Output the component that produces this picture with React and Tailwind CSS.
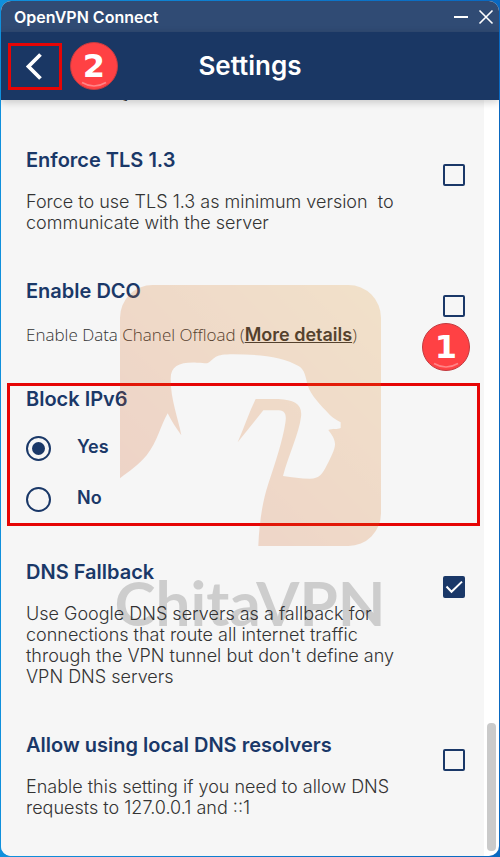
import React, { useState } from "react";

const headingClass = "text-[20px] leading-6 font-semibold text-[#1a3868]";
const bodyClass = "text-[18px] leading-[21px] font-light text-[#333]";

function Badge({ children }) {
  return (
    <span className="flex size-12 items-center justify-center rounded-full border border-[#c23b40] bg-[#ff4144] font-['DejaVu_Sans',sans-serif] text-[32px] leading-8 font-bold text-white">
      <svg viewBox="0 0 48 48" className="absolute size-12" fill="none" aria-hidden="true">
        <path d="M12 40.5Q24 47.5 36 40.5" stroke="#ff8587" strokeWidth="1.6" />
      </svg>
      {children}
    </span>
  );
}

function Setting({ id, title, checked = false, className, children }) {
  const [on, setOn] = useState(checked);
  return (
    <section className={`flex items-start justify-between pr-[19px] pl-[25px] ${className}`}>
      <div className="max-w-[374px]">
        <label htmlFor={id} className={`block ${headingClass}`}>
          {title}
        </label>
        {children}
      </div>
      <span className="mt-4 grid size-[22px] shrink-0 place-items-center">
        <input
          id={id}
          type="checkbox"
          checked={on}
          onChange={(e) => setOn(e.target.checked)}
          className="col-start-1 row-start-1 size-[22px] appearance-none rounded-[2px] border-2 border-[#1a3868] checked:bg-[#1a3868]"
        />
        {on && (
          <svg
            viewBox="0 0 22 22"
            className="pointer-events-none col-start-1 row-start-1 size-[22px]"
            fill="none"
            stroke="white"
            strokeWidth="2"
          >
            <path d="M3.500 10.500 8.500 15.800 19 5.600" />
          </svg>
        )}
      </span>
    </section>
  );
}

function RadioRow({ value, label, selected, onSelect }) {
  return (
    <div className="flex h-[25px] items-center gap-[26px]">
      <input
        id={`ipv6-${value}`}
        type="radio"
        name="ipv6"
        checked={selected === value}
        onChange={() => onSelect(value)}
        className="grid size-[25px] appearance-none place-items-center rounded-full border-2 border-[#1a3868] before:size-[13px] before:rounded-full before:content-[''] checked:before:bg-[#1a3868]"
      />
      <label
        htmlFor={`ipv6-${value}`}
        className="pb-1 text-[18px] leading-[21px] font-semibold text-[#1a3868]"
      >
        {label}
      </label>
    </div>
  );
}

function Watermark() {
  return (
    <div className="pointer-events-none absolute inset-x-0 top-[185px] flex flex-col items-center opacity-20">
      <svg viewBox="60 44 783 783" className="size-[261px]">
        <defs>
          <linearGradient id="brand" x1="0" y1="1" x2="1" y2="0">
            <stop offset="0" stopColor="#cb4410" />
            <stop offset="1" stopColor="#e1901e" />
          </linearGradient>
        </defs>
        <path
          fill="url(#brand)"
          d="M60 624V142A98 98 0 0 1 158 44H745A98 98 0 0 1 843 142V729A98 98 0 0 1 745 827H475C478 755 487 695 505 640C528 572 548 510 556 458C561 428 553 420 530 420H490L413 516C433 470 447 426 467 386H535C583 388 608 402 603 440C597 490 565 555 549 617C578 621 600 625 630 625C658 625 667 612 682 582C692 562 706 535 705 520C704 504 695 493 685 479C697 474 712 478 722 473V456C708 448 699 443 689 433C660 403 632 374 623 345C617 320 615 300 597 288C550 258 480 252 400 252C342 252 348 262 327 276C320 282 314 277 290 277C240 275 212 286 212 325C212 390 234 440 244 495C228 473 215 453 203 429C182 465 172 515 140 555C115 585 88 602 60 624Z"
        />
      </svg>
      <span className="mt-[22px] font-[Lato,sans-serif] text-[62px] leading-[68px] font-bold text-[#2d2d2d]">
        ChitaVPN
      </span>
    </div>
  );
}

export default function App() {
  const [ipv6, setIpv6] = useState("yes");

  return (
    <div className="min-h-screen bg-[linear-gradient(90deg,#1090dc,#0a68c0)] p-px font-[Inter,sans-serif]">
      <div className="flex min-h-[calc(100vh-2px)] flex-col overflow-hidden rounded-[10px] bg-white">
        <div className="flex h-[31px] items-center justify-between bg-[#304b74] pr-[5px] pl-[13px] text-white">
          <h1 className="text-[16px] leading-5 font-semibold">OpenVPN Connect</h1>
          <div className="flex gap-[9px]">
            <button aria-label="Minimize">
              <svg viewBox="0 0 16 16" className="size-4" stroke="currentColor" strokeWidth="2">
                <path d="M1 8h14" />
              </svg>
            </button>
            <button aria-label="Close">
              <svg viewBox="0 0 16 16" className="size-4" stroke="currentColor" strokeWidth="1.6">
                <path d="M1.5 1.5l13 13M14.5 1.5l-13 13" />
              </svg>
            </button>
          </div>
        </div>

        <header className="z-10 grid h-[68px] grid-cols-[1fr_auto_1fr] items-center bg-[#1a3764] pl-[7px] shadow-[0_2px_8px_rgba(0,0,0,0.2)]">
          <div className="flex items-center gap-2">
            <button
              aria-label="Back"
              className="flex h-[47px] w-[54px] items-center justify-center border-3 border-[#e60505]"
            >
              <svg
                viewBox="0 0 20 28"
                className="h-7 w-5"
                fill="none"
                stroke="white"
                strokeWidth="3.8"
              >
                <path d="M15.5 2.5 3.500 14.500l12 12" />
              </svg>
            </button>
            <Badge>2</Badge>
          </div>
          <h2 className="pr-[7px] text-[26px] leading-8 font-semibold text-white">Settings</h2>
        </header>

        <div className="relative flex grow">
          <main className="grow bg-[#f6f6f6]">
            <p className="flex h-px items-end overflow-hidden pl-[121px] text-[18px] leading-[18px] text-[#333]">
              y
            </p>
            <Setting id="tls" title="Enforce TLS 1.3" className="mt-[47px]">
              <p className={`mt-[19px] whitespace-pre-wrap ${bodyClass}`}>
                {"Force to use TLS 1.3 as minimum version  to communicate with the server"}
              </p>
            </Setting>

            <Setting id="dco" title="Enable DCO" className="mt-[46px]">
              <p className="mt-5 font-['Open_Sans',sans-serif] text-[17px] leading-6 font-light text-[#333]">
                Enable Data Chanel Offload (
                <a
                  href="#dco"
                  className="font-[Inter,sans-serif] text-[18px] font-semibold underline"
                >
                  More details
                </a>
                )
              </p>
            </Setting>

            <fieldset className="mt-9 mr-1 ml-[6px] h-[143px] border-3 border-[#e60505] px-4 pt-px">
              <div className={headingClass}>Block IPv6</div>
              <div className="mt-[25px] flex flex-col gap-[26px]">
                <RadioRow value="yes" label="Yes" selected={ipv6} onSelect={setIpv6} />
                <RadioRow value="no" label="No" selected={ipv6} onSelect={setIpv6} />
              </div>
            </fieldset>

            <Setting id="dns" title="DNS Fallback" checked className="mt-[34px]">
              <p className={`mt-[19px] ${bodyClass}`}>
                Use Google DNS servers as a fallback for connections that route all internet
                traffic through the VPN tunnel but don't define any VPN DNS servers
              </p>
            </Setting>

            <Setting id="resolvers" title="Allow using local DNS resolvers" className="mt-[46px]">
              <p className={`mt-[19px] ${bodyClass}`}>
                Enable this setting if you need to allow DNS requests to 127.0.0.1 and ::1
              </p>
            </Setting>
          </main>

          <div className="flex w-[15px] shrink-0 flex-col justify-end px-[3px] pb-[5px]">
            <div className="h-32 rounded-[4px] bg-[#cacaca]" />
          </div>

          <Watermark />
          <div className="absolute top-[223px] right-[29px]">
            <Badge>1</Badge>
          </div>
        </div>
      </div>
    </div>
  );
}
